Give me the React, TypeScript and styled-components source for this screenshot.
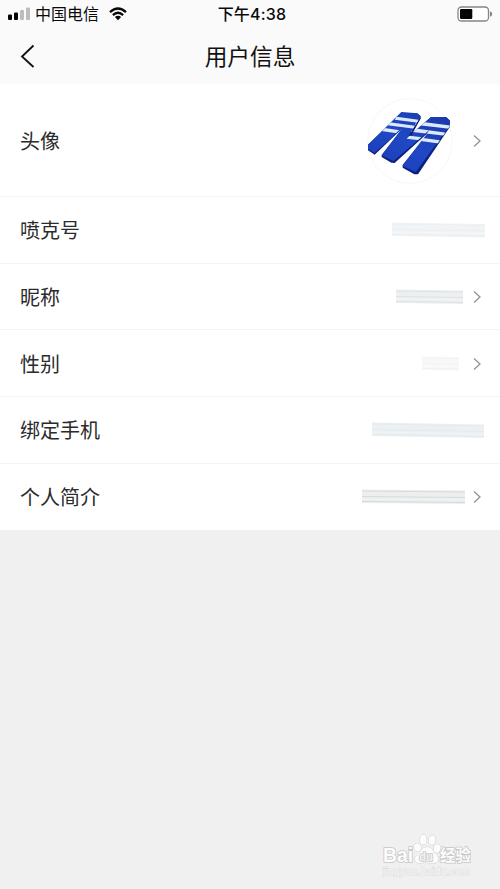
import React from "react";
import styled, { createGlobalStyle } from "styled-components";

const GlobalStyle = createGlobalStyle`
  * { box-sizing: border-box; }
  body {
    margin: 0;
    background: #f0f0f0;
    font-family: "Liberation Sans", "Noto Sans CJK SC", sans-serif;
  }
`;

const Screen = styled.main`
  display: flex;
  flex-direction: column;
  width: 500px;
  height: 889px;
  background: #f0f0f0;
  overflow: hidden;
`;

const Header = styled.header`
  height: 84px;
  background: #fafafa;
`;

const StatusBar = styled.div`
  display: grid;
  grid-template-columns: 1fr auto 1fr;
  align-items: center;
  height: 28px;
  padding: 0 7px 0 8px;
  color: #0b0b0b;
`;

const Network = styled.div`
  display: flex;
  align-items: center;
`;

const Carrier = styled.span`
  margin: 0 10px 0 5px;
  padding-bottom: 2px;
  font: 400 16px/24px "Noto Sans CJK SC", sans-serif;
`;

const Clock = styled.time`
  padding-left: 3px;
  font: 500 16px/24px Inter, "Noto Sans CJK SC", sans-serif;
  letter-spacing: 0.2px;
`;

const BatterySlot = styled.div`
  display: flex;
  justify-content: flex-end;
`;

const NavBar = styled.nav`
  display: grid;
  grid-template-columns: 60px 1fr 60px;
  align-items: center;
  height: 56px;
`;

const BackButton = styled.button`
  display: flex;
  align-items: center;
  height: 44px;
  padding: 0 0 0 20px;
  border: 0;
  background: none;
`;

const Title = styled.h1`
  margin: 0;
  color: #111;
  font: 400 22.7px/32px "Noto Sans CJK SC", sans-serif;
  text-align: center;
`;

const List = styled.section`
  background: #fff;
`;

const Row = styled.div<{ $tall?: boolean; $arrow?: boolean }>`
  display: flex;
  align-items: center;
  height: ${(p) => (p.$tall ? 113 : 66.65)}px;
  padding: ${(p) => (p.$arrow ? "2px 18px 0" : "1px 15px 0")} 20px;
  border-bottom: 1px solid #f3f3f3;
  &:last-child { border-bottom: 0; padding-top: 1px; }
`;

const Label = styled.span`
  flex: 1;
  color: #2b2b2b;
  font: 400 20px/30px "Noto Sans CJK SC", sans-serif;
`;

const Value = styled.div<{ $gap: number }>`
  display: flex;
  margin-right: ${(p) => p.$gap}px;
`;

const Footer = styled.footer`
  display: flex;
  flex: 1;
  align-items: flex-end;
  justify-content: flex-end;
  padding: 0 29px 8px 0;
`;

const Chevron = () => (
  <svg width="10" height="14" viewBox="0 0 10 14" fill="none">
    <path d="M2 1.5 L8 7 L2 12.5" stroke="#929292" strokeWidth="1.3" />
  </svg>
);

const Signal = () => (
  <svg width="22" height="14" viewBox="0 0 22 14">
    <rect x="0" y="7.5" width="4" height="5.5" rx="1" fill="#050505" />
    <rect x="6" y="5.5" width="4" height="7.5" rx="1" fill="#050505" />
    <rect x="12" y="3" width="4" height="10" rx="1" fill="#bdbdbd" />
    <rect x="18" y="0.5" width="4" height="12.5" rx="1" fill="#bdbdbd" />
  </svg>
);

const Wifi = () => (
  <svg width="18" height="14" viewBox="0 0 18 14" fill="none">
    <path d="M1 5.1Q9-2 17 5.1M3.9 8.1Q9 3.5 14.1 8.1" stroke="#050505" strokeWidth="2.3" />
    <path d="M5.9 10.1Q9 7.2 12.1 10.1L9 13.3Z" fill="#050505" />
  </svg>
);

const Battery = () => (
  <svg width="36" height="16" viewBox="0 0 36 16">
    <rect x="1" y="1" width="30.5" height="14" rx="3.5" fill="#fff" stroke="#858585" strokeWidth="1.3" />
    <rect x="3" y="3" width="12.3" height="10" rx="1.2" fill="#050505" />
    <path d="M33 5.3Q35.2 6 35.2 8T33 10.7Z" fill="#858585" />
  </svg>
);

const Avatar = () => (
  <svg width="90" height="90" viewBox="0 0 270 270">
    <defs>
      <linearGradient id="plank" x1="0" y1="1" x2="1" y2="0">
        <stop offset="0" stopColor="#1a3cba" />
        <stop offset="0.5" stopColor="#2048c4" />
        <stop offset="1" stopColor="#1838a8" />
      </linearGradient>
      <clipPath id="outline">
        <path d="M112 20L161 24L170 33L134 92L201 35L247 36L258 46V62L158 203L115 182L198 72L89 170L53 150L118 62L31 146L12 132V118Z" />
      </clipPath>
    </defs>
    <circle cx="141" cy="135" r="127" fill="#fff" stroke="#f7f7f7" strokeWidth="3" />
    <g transform="translate(3 28)">
      <path
        d="M112 22L161 25L170 33V40L136 94L201 35L247 36L258 46V64L162 207L151 207L116 187V179L197 78L92 173L82 172L53 155V149L114 70L32 148L12 135V118Z"
        fill="#0d2280"
      />
      <path
        d="M112 20L161 24L170 33L134 92L201 35L247 36L258 46V60L155 200L115 181L196 76L88 167L53 150L114 70L31 143L12 131V118Z"
        fill="url(#plank)"
      />
      <path d="M169 40L137 101L131 98L133 92Z" fill="#0d2280" />
      <g fill="#dce9fb" clipPath="url(#outline)">
        <path d="M98 34L168 44L163 52L92 43Z" />
        <path d="M76 51L158 62L152 70L70 60Z" />
        <path d="M62 68L107 75L98 84L52 77Z" />
        <path d="M160 48L262 61L256 70L152 58Z" />
        <path d="M150 69L248 82L243 91L140 79Z" />
        <path d="M136 91L175 96L166 105L128 100Z" />
        <path d="M178 98L236 106L230 115L170 107Z" />
      </g>
    </g>
  </svg>
);

type SmudgeProps = { width: number; fill: string; line: string; tilt?: number };

const Smudge = ({ width, fill, line, tilt = 1 }: SmudgeProps) => (
  <svg width={width} height="18" viewBox={`0 0 ${width} 18`}>
    <path d={`M0 1.5L${width} ${1.5 + tilt}V${15 + tilt}L0 15Z`} fill={fill} />
    <path
      d={`M0 3L${width} ${3 + tilt}M0 8.5L${width} ${8.5 + tilt}M0 13.5L${width} ${13.5 + tilt}`}
      stroke={line}
      strokeWidth="1.1"
    />
    <path d={`M0 11L${width} ${11 + tilt}`} stroke="#fff" strokeOpacity="0.35" />
  </svg>
);

const Watermark = () => (
  <svg width="94" height="50" viewBox="0 0 94 50" fill="#fcfcfc" stroke="#c6c6c6" strokeWidth="0.8">
    <g fontFamily="Liberation Sans, sans-serif" fontWeight="700" paintOrder="stroke">
      <text x="6" y="31" fontSize="20.5" textLength="30" lengthAdjust="spacingAndGlyphs" strokeWidth="1.7">Bai</text>
      <ellipse cx="40.5" cy="16.5" rx="3.4" ry="4.2" transform="rotate(-20 40.5 16.5)" />
      <ellipse cx="46.2" cy="8.7" rx="3.4" ry="4.9" />
      <ellipse cx="55" cy="9" rx="3.4" ry="4.9" transform="rotate(10 55 9)" />
      <ellipse cx="60" cy="17.5" rx="3.3" ry="4.3" transform="rotate(15 60 17.5)" />
      <path d="M50 16C45 16 44 21 40 24C36 27 38 32.5 43 32Q49 31 55 32C62 33 63 27 59 23.5C56 20.5 55 16 50 16Z" />
      <text x="42" y="30" fontSize="12.5" textLength="14" lengthAdjust="spacingAndGlyphs" fill="#f3f3f3" strokeWidth="1.6">du</text>
    </g>
    <text x="63" y="30" fontSize="15.5" fontFamily="Noto Sans CJK SC, sans-serif" fontWeight="700" paintOrder="stroke" strokeWidth="1.6">经验</text>
    <text x="6" y="44" fontSize="10.5" textLength="87" fontFamily="Liberation Sans, sans-serif" paintOrder="stroke" stroke="#dedede" strokeWidth="1.2" fill="#f8f8f8">jingyan.baidu.com</text>
  </svg>
);

const fields = [
  { label: "喷克号", arrow: false, gap: 0, width: 93, fill: "#f1f4f6", line: "#eceff1", tilt: 1.4 },
  { label: "昵称", arrow: true, gap: 9, width: 67, fill: "#edf0f1", line: "#dde2e4", tilt: 1 },
  { label: "性别", arrow: true, gap: 13, width: 37, fill: "#f8f8f8", line: "#f2f2f2", tilt: 0.5 },
  { label: "绑定手机", arrow: false, gap: 1, width: 112, fill: "#ebf0f2", line: "#e5eaed", tilt: 2 },
  { label: "个人简介", arrow: true, gap: 7, width: 103, fill: "#eceeef", line: "#d6dbdd", tilt: 1 },
];

export default function App() {
  return (
    <>
      <GlobalStyle />
      <Screen>
        <Header>
          <StatusBar>
            <Network>
              <Signal />
              <Carrier>中国电信</Carrier>
              <Wifi />
            </Network>
            <Clock>下午4:38</Clock>
            <BatterySlot><Battery /></BatterySlot>
          </StatusBar>
          <NavBar>
            <BackButton aria-label="返回">
              <svg width="15" height="24" viewBox="0 0 15 24" fill="none">
                <path d="M13.5 1.5L2 12.5L13.5 23" stroke="#111" strokeWidth="1.8" />
              </svg>
            </BackButton>
            <Title>用户信息</Title>
          </NavBar>
        </Header>
        <List>
          <Row $tall $arrow>
            <Label>头像</Label>
            <Value $gap={19}><Avatar /></Value>
            <Chevron />
          </Row>
          {fields.map(({ label, arrow, gap, ...smudge }) => (
            <Row key={label} $arrow={arrow}>
              <Label>{label}</Label>
              <Value $gap={gap}><Smudge {...smudge} /></Value>
              {arrow && <Chevron />}
            </Row>
          ))}
        </List>
        <Footer><Watermark /></Footer>
      </Screen>
    </>
  );
}
